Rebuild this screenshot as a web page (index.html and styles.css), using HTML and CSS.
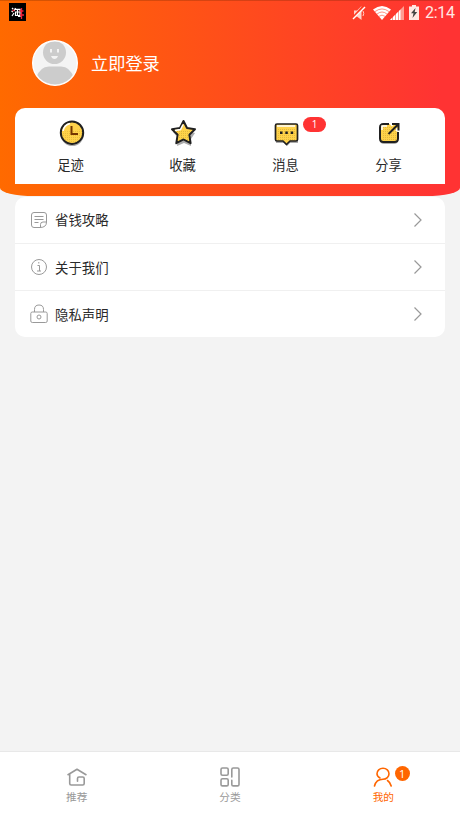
FILE: index.html
```html
<!DOCTYPE html>
<html lang="zh-CN">
<head>
<meta charset="utf-8">
<title>我的</title>
<link rel="stylesheet" href="styles.css">
</head>
<body>
<div class="app">
  <header class="header">
    <div class="status">
      <svg class="notice" width="17" height="18" viewBox="0 0 17 18"><path fill="#000" d="M0 0h17v18H0z"/><path fill="none" stroke="#fff" stroke-width="1.200" d="M3 5l1.300 1.200M2.500 8l1.500 1M3 13l2-3M6.500 5L5 8M6 6.300h5v7H9M6 9h5M8.500 7v5M6.500 9v3.500h4"/><path fill="none" stroke="#f02038" stroke-width="1.300" d="M3.500 7.500h2M12.500 5v11M10.500 8h4M11 12h4"/></svg>
      <div class="status-right">
        <svg class="mute" width="14" height="16" viewBox="0 0 14 16"><path fill="#ffd1c9" d="M2 5.500h3L9.500 1v14L5 11.500H2z"/><path fill="none" stroke="#ffd1c9" d="M11 6q1.500 2.500 0 5"/><path stroke="#ff3d25" stroke-width="2.600" d="M1 13L12 1"/><path stroke="#fff" stroke-width="1.400" d="M1 14L13 2"/></svg>
        <svg class="wifi" width="18" height="14" viewBox="0 0 20 14" preserveAspectRatio="none"><path fill="#fff" d="M0 3.500Q10-3.500 20 3.500L10 14z"/><path fill="none" stroke="#ff5a45" stroke-width=".7" d="M2.200 5.600Q10 .3 17.800 5.600M4.500 8Q10 4 15.500 8M6.700 10.300Q10 8 13.300 10.300"/></svg>
        <svg class="signal" width="14" height="14" viewBox="0 0 14 14"><path fill="#ff9d91" d="M14 0v14H0z"/><path fill="#fff" d="M0 14l2-2v2zM3 11l2-2v5H3zM6 8l2-2v8H6zM9 5l1.500-1.500V14H9z"/></svg>
        <svg class="battery" width="10" height="15" viewBox="0 0 10 15"><path fill="#ffe7e3" d="M3 0h4v1.500h3V15H0V1.500h3z"/><path fill="#444" d="M6.500 3L2 8.200h2.500L3.500 13 8.200 7H5.700z"/></svg>
        <span class="time">2:14</span>
      </div>
    </div>
    <div class="profile">
      <svg class="avatar" width="46" height="46" viewBox="0 0 46 46"><defs><clipPath id="face"><circle cx="23" cy="23" r="21.500"/></clipPath></defs><circle cx="23" cy="23" r="22.300" fill="#f4f4f4" stroke="#fff" stroke-width="1.400"/><g clip-path="url(#face)"><circle cx="22.500" cy="12.500" r="11.500" fill="#ccc"/><path fill="#ccc" d="M4 38q4-11.500 13-11.500h12Q38 26.500 42 38v8H4z"/></g><path fill="#f4f4f4" d="M18 9h2v3.500h-2zM25 9h2v3.500h-2zM19 16h7q-1 3-3.500 3T19 16z"/></svg>
      <span class="login">立即登录</span>
    </div>
    <nav class="shortcuts">
      <a class="shortcut"><svg width="28" height="28" viewBox="0 0 28 28"><defs><pattern id="dots" width="2" height="2" patternUnits="userSpaceOnUse"><path fill="#ffd348" d="M0 0h2v2H0z"/><path fill="#d9ad38" d="M0 0h1v1H0z"/></pattern></defs><circle cx="15.300" cy="15.600" r="11.500" fill="#aaa"/><circle cx="15" cy="13.700" r="11.200" fill="#ffd24a" stroke="#202020" stroke-width="2"/><path fill="url(#dots)" opacity=".6" d="M5 13l20-3q1 10-8 14Q6 24 5 13z"/><path fill="none" stroke="#fff" stroke-width="1.500" d="M6 12q1-6 7-7.500"/><path fill="none" stroke="#753600" stroke-width="2" d="M14.500 7v8H21"/></svg><span>足迹</span></a>
      <a class="shortcut"><svg width="28" height="28" viewBox="0 0 28 28"><path fill="#aaa" d="M15 5l4 7 7 2-4 6v7l-7-3-7 3 1-8-5-6 7-1z"/><path fill="#ffd24a" stroke="#202020" stroke-width="2" stroke-linejoin="round" d="M14.500 2L18 9l8 1.200-5.700 5.500 1.300 8.500-7.100-3.800-7.200 3.800 1.400-8.500L3 10.200 11 9z"/><path fill="url(#dots)" opacity=".7" d="M7 12l15-1-3 5 1 6-6-3-5 2 1-6z"/><path fill="none" stroke="#fff" stroke-width="1.500" d="M6 11.500l5.500-1 2.500-5"/></svg><span>收藏</span></a>
      <a class="shortcut"><svg width="28" height="28" viewBox="0 0 28 28"><path fill="#aaa" d="M4 8h22v16h-8l-3 3-3-3H4z"/><path fill="#ffd24a" stroke="#202020" stroke-width="1.700" stroke-linejoin="round" d="M5 5h19q1.500 0 1.500 1.500v14q0 1.500-1.500 1.500h-6l-3.500 3.500L11 22H5q-1.500 0-1.500-1.500v-14Q3.500 5 5 5z"/><path fill="url(#dots)" opacity=".7" d="M6 9h18v12H6z"/><path stroke="#fff" stroke-width="1.500" d="M5 7h18"/><path fill="#202020" d="M8 12.500h2.500V15H8zM13.300 12.500h2.500V15h-2.500zM18.700 12.500h2.500V15h-2.500z"/></svg><span>消息</span><b class="badge">1</b></a>
      <a class="shortcut"><svg width="28" height="28" viewBox="0 0 28 28"><rect x="5" y="7" width="18" height="18" rx="4" fill="#aaa"/><rect x="5" y="5" width="18" height="18" rx="3.500" fill="#ffd24a"/><path fill="url(#dots)" opacity=".7" d="M7 8h14v13H7z"/><path fill="none" stroke="#202020" stroke-width="2" d="M14 5H8.500Q5 5 5 8.500v11Q5 23 8.500 23h11q3.500 0 3.500-3.500V13"/><path fill="none" stroke="#fff" stroke-width="1.500" d="M7 11V7h5"/><path stroke="#fff" stroke-width="3" d="M16 4.500l2 2M21 10.500l3 1"/><path fill="none" stroke="#202020" stroke-width="2" d="M13.500 15L23 5.500M17 5h6.500v6.500"/></svg><span>分享</span></a>
    </nav>
  </header>
  <main class="menu">
    <a class="row"><svg width="18" height="18" viewBox="0 0 18 18"><path d="M10 16.500H4Q1.500 16.500 1.500 14V4Q1.500 1.500 4 1.500h10q2.500 0 2.500 2.500v7q0 5.500-6.500 5.500zM4.500 5.500h9M4.500 8.500h9M4.500 11.500h4M10.500 16.500v-3q0-2.500 2.500-2.500h3.500"/></svg><span>省钱攻略</span><svg class="chevron" width="10" height="16" viewBox="0 0 10 16"><path d="M1.500 1.500L8 8l-6.500 6.500"/></svg></a>
    <a class="row"><svg width="18" height="18" viewBox="0 0 18 18"><circle cx="9" cy="9" r="7.500"/><path d="M7.500 7.500h2V13M7 13h4M8.800 4v1.500"/></svg><span>关于我们</span><svg class="chevron" width="10" height="16" viewBox="0 0 10 16"><path d="M1.500 1.500L8 8l-6.500 6.500"/></svg></a>
    <a class="row"><svg width="18" height="20" viewBox="0 0 18 20"><rect x=".8" y="8" width="16.400" height="10.500" rx="1.500"/><path d="M4.500 8V5.500q0-4.500 4.500-4.500t4.500 4.500V8"/><circle cx="9" cy="13" r="2"/></svg><span>隐私声明</span><svg class="chevron" width="10" height="16" viewBox="0 0 10 16"><path d="M1.500 1.500L8 8l-6.500 6.500"/></svg></a>
  </main>
  <nav class="tabs">
    <a class="tab"><svg width="22" height="22" viewBox="0 0 22 22"><path d="M2 8.700l9-5.500 9 5.500M3.700 8v9.500q0 1.500 1.500 1.500h11.500q1.500 0 1.500-1.500v-5q0-1.500-1.500-1.500h-3.700q-1.500 0-1.500 1.500v2.700"/></svg><span>推荐</span></a>
    <a class="tab"><svg width="22" height="22" viewBox="0 0 22 22"><rect x="2" y="2" width="7.200" height="7.200" rx="1.500"/><rect x="2" y="12.700" width="7.200" height="7.200" rx="1.500"/><path d="M12.800 11V3.500q0-1.500 1.500-1.500h4.200Q20 2 20 3.500v14.900q0 1.500-1.500 1.500h-4.200q-1.500 0-1.500-1.500v-4"/></svg><span>分类</span></a>
    <a class="tab active"><svg width="22" height="22" viewBox="0 0 22 22"><path d="M8 12Q5 10.500 5 7.800C5 4.800 7.500 2.300 11 2.300s6 2.500 6 5.500-2.500 5.500-6 5.500c-4.500 0-7.500 2.500-8.500 6.700M15.500 14.500q3 2 3.700 5.500"/></svg><span>我的</span><b class="dot">1</b></a>
  </nav>
</div>
</body>
</html>
```
FILE: styles.css
```css
* { box-sizing: border-box; }
body { margin: 0; font-family: "Noto Sans CJK SC", "Noto Sans", sans-serif; color: #2a2a2a; background: #f3f3f3; }
.app { height: 819px; display: flex; flex-direction: column; overflow: hidden; }
.header { height: 196px; padding: 0 15px; background: linear-gradient(90deg, #ff6a00, #ff3333 96%); border-radius: 0 0 34px 34px / 0 0 8px 8px; box-shadow: inset 0 1px rgba(90,30,0,.25); flex: none; }
.status { height: 26px; margin: 0 -9px 0 -6px; display: flex; justify-content: space-between; align-items: flex-start; }
.notice { margin-top: 3px; }
.status-right { display: flex; height: 25px; align-items: center; }
.wifi { margin-left: 7px; }
.signal { margin-left: -1px; }
.battery { margin-left: 5px; }
.time { margin-left: 6px; width: 29px; font: 16px/26px Roboto, sans-serif; color: #ffe6e2; letter-spacing: -.3px; white-space: nowrap; }
.profile { display: flex; align-items: center; height: 46px; margin: 14px 0 0 17px; }
.login { margin-left: 13px; font-size: 17.200px; line-height: 24px; color: #fff; }
.shortcuts { height: 76px; margin-top: 21.500px; display: grid; grid-template-columns: 112px 112px 94px 112px; background: #fff; border-radius: 10px 10px 0 0; }
.shortcut { position: relative; display: flex; flex-direction: column; align-items: center; padding-top: 11px; font-size: 13.300px; line-height: 20px; }
.shortcut span { margin: 8.500px 1px 0 0; }
.badge { position: absolute; left: 64px; top: 9px; width: 23px; height: 15px; border-radius: 8px; background: #ff3333; color: #fff; font: 400 10px/15px "Open Sans", sans-serif; text-align: center; }
.menu { margin: 0.500px 15px 0; background: #fff; border-radius: 10px; overflow: hidden; flex: none; }
.row { height: 47px; padding: 0 22px 0 15px; display: flex; align-items: center; border-bottom: 1px solid #f0f0f0; font-size: 13.400px; line-height: 20px; }
.row:first-child { height: 47.500px; }
.row:last-child { border: 0; height: 46.300px; }
.row span { margin: -1px 0 0 7px; flex: 1; }
.row svg { fill: none; stroke: #999; stroke-width: 1; }
.row .chevron { stroke-width: 1.200; }
.tabs { margin-top: auto; height: 68px; border-top: 1px solid #e8e8e8; background: #fff; display: grid; grid-template-columns: repeat(3, 1fr); }
.tab { position: relative; display: flex; flex-direction: column; align-items: center; padding-top: 14px; color: #999; font-size: 10.700px; line-height: 18px; }
.tab svg { fill: none; stroke: currentColor; stroke-width: 1.600; stroke-linecap: round; stroke-linejoin: round; }
.tab.active { color: #ff6600; }
.dot { position: absolute; left: 88px; top: 14px; width: 15px; height: 15px; border-radius: 50%; background: #ff6600; color: #fff; font: 400 11px/15px "Open Sans", sans-serif; text-align: center; }
```
